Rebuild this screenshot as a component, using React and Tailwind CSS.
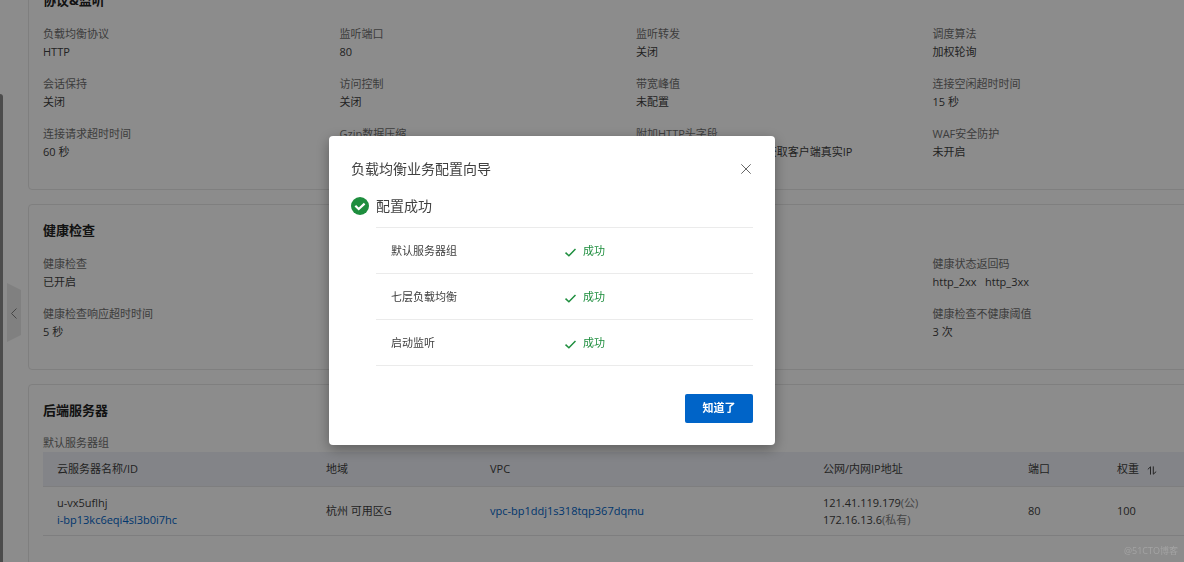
import React, { useState } from "react";

const listenerInfo = [
  { label: "负载均衡协议", value: "HTTP" },
  { label: "监听端口", value: "80" },
  { label: "监听转发", value: "关闭" },
  { label: "调度算法", value: "加权轮询" },
  { label: "会话保持", value: "关闭" },
  { label: "访问控制", value: "关闭" },
  { label: "带宽峰值", value: "未配置" },
  { label: "连接空闲超时时间", value: "15 秒" },
  { label: "连接请求超时时间", value: "60 秒" },
  { label: "Gzip数据压缩", value: "已开启" },
  { label: "附加HTTP头字段", value: "从X-Forwarded-For头字段获取客户端真实IP" },
  { label: "WAF安全防护", value: "未开启" },
];

const healthInfo = [
  { label: "健康检查", value: "已开启" },
  { label: "健康检查协议", value: "HTTP" },
  { label: "健康检查端口", value: "80" },
  { label: "健康状态返回码", value: "http_2xx\u00a0\u00a0 http_3xx" },
  { label: "健康检查响应超时时间", value: "5 秒" },
  { label: "健康检查间隔时间", value: "2 秒" },
  { label: "健康检查健康阈值", value: "3 次" },
  { label: "健康检查不健康阈值", value: "3 次" },
];

const steps = ["默认服务器组", "七层负载均衡", "启动监听"];

function Card({ title, children }) {
  return (
    <section className="border border-[#e8e8e8] rounded px-[14px] pt-4 pb-7">
      <h2 className="text-[13px] leading-[18px] font-bold text-[#222]">{title}</h2>
      {children}
    </section>
  );
}

function InfoGrid({ items }) {
  return (
    <dl className="mt-4 grid grid-cols-4 gap-y-[14px]">
      {items.map((item) => (
        <div key={item.label} className="whitespace-nowrap">
          <dt className="text-[#707070]">{item.label}</dt>
          <dd className="text-[#404040]">{item.value}</dd>
        </div>
      ))}
    </dl>
  );
}

function SortIcon() {
  return (
    <svg viewBox="0 0 10 9" className="w-[10px] h-[9px] mt-1" fill="none" stroke="#444" strokeWidth="1">
      <path d="M0.8 3.4 3.5 0.8V8.6M6.3 0.4V8.2L9.2 5.6" />
    </svg>
  );
}

function ServerTable() {
  return (
    <table className="w-full table-fixed text-left text-[#404040]">
      <colgroup>
        <col className="w-[269px]" />
        <col className="w-[164px]" />
        <col className="w-[333px]" />
        <col className="w-[205px]" />
        <col className="w-[89px]" />
        <col />
      </colgroup>
      <thead>
        <tr className="h-[34px] bg-[#eff1f8] border-b border-[#e6e6e8]">
          <th className="px-[14px] font-normal">云服务器名称/ID</th>
          <th className="px-[14px] font-normal">地域</th>
          <th className="px-[14px] font-normal">VPC</th>
          <th className="px-[14px] font-normal">公网/内网IP地址</th>
          <th className="px-[14px] font-normal">端口</th>
          <th className="px-[14px] font-normal">
            <span className="flex items-center gap-2">
              权重 <SortIcon />
            </span>
          </th>
        </tr>
      </thead>
      <tbody>
        <tr className="h-[49px] border-b border-[#e6e6e8] leading-[17px]">
          <td className="px-[14px]">
            <div>u-vx5uflhj</div>
            <a href="#instance" className="text-[#0064c8]">i-bp13kc6eqi4sl3b0i7hc</a>
          </td>
          <td className="px-[14px]">杭州 可用区G</td>
          <td className="px-[14px]">
            <a href="#vpc" className="text-[#0064c8]">vpc-bp1ddj1s318tqp367dqmu</a>
          </td>
          <td className="px-[14px]">
            <div>121.41.119.179<span className="text-[#808080]">(公)</span></div>
            <div>172.16.13.6<span className="text-[#808080]">(私有)</span></div>
          </td>
          <td className="px-[14px]">80</td>
          <td className="px-[14px]">100</td>
        </tr>
      </tbody>
    </table>
  );
}

function WizardDialog({ onClose }) {
  return (
    <div className="fixed inset-0 flex items-center justify-center pr-20 pt-[18px] bg-black/45">
      <div
        role="dialog"
        aria-labelledby="wizard-title"
        className="w-[446px] rounded bg-white p-[22px] text-[#404040] shadow-[0_4px_14px_rgba(0,0,0,0.35)]"
      >
        <div className="flex items-center justify-between">
          <h1 id="wizard-title" className="text-[14px] leading-[22px]">负载均衡业务配置向导</h1>
          <button type="button" aria-label="关闭" onClick={onClose} className="p-[2px]">
            <svg viewBox="0 0 10 10" className="w-[10px] h-[10px]" fill="none" stroke="#666" strokeWidth="1">
              <path d="M0.3 0.3 9.7 9.7M9.7 0.3 0.3 9.7" />
            </svg>
          </button>
        </div>
        <div className="mt-[15px] flex items-center gap-[7px]">
          <svg viewBox="0 0 18 18" className="w-[18px] h-[18px]">
            <circle cx="9" cy="9" r="9" fill="#1e8e3e" />
            <path d="M4.3 8.7 7.7 12 13.6 6.6" fill="none" stroke="#fff" strokeWidth="2.2" />
          </svg>
          <p className="text-[14px] leading-[22px]">配置成功</p>
        </div>
        <div className="mt-[10px] ml-[25px]">
          <table className="w-full table-fixed text-left border-t border-[#ebebeb]">
            <colgroup>
              <col className="w-[174px]" />
              <col />
            </colgroup>
            <tbody>
              {steps.map((step) => (
                <tr key={step} className="h-[46px] border-b border-[#ebebeb]">
                  <th className="px-[15px] pt-[2px] font-normal">{step}</th>
                  <td className="px-[15px] pt-[2px] text-[#1e8e3e]">
                    <span className="flex items-center gap-[7px]">
                      <svg viewBox="0 0 11 9" className="w-[11px] h-[9px] mt-[2px]" fill="none" stroke="#1e8e3e" strokeWidth="1.5">
                        <path d="M0.5 4.6 3.9 7.8 10.5 1" />
                      </svg>
                      成功
                    </span>
                  </td>
                </tr>
              ))}
            </tbody>
          </table>
        </div>
        <div className="mt-7 flex justify-end">
          <button
            type="button"
            onClick={onClose}
            className="w-[68px] h-[29px] rounded-xs bg-[#0064c8] font-bold text-white"
          >
            知道了
          </button>
        </div>
      </div>
    </div>
  );
}

function App() {
  const [open, setOpen] = useState(true);

  return (
    <div className="relative h-screen overflow-hidden bg-white font-['Open_Sans','Noto_Sans_CJK_SC',sans-serif] text-[11px] leading-[18px]">
      <div className="absolute left-0 top-[94px] bottom-0 w-[3px] rounded-tr bg-[#8a8a8a]" />
      <button
        type="button"
        aria-label="收起菜单"
        className="absolute left-[7px] top-[283px] w-[14px] h-[59px]"
      >
        <svg viewBox="0 0 14 59" className="w-[14px] h-[59px]">
          <path d="M0 0 14 7V52L0 59Z" fill="#e9e9e9" />
          <path d="M9.5 25.5 4.5 30.5 9.5 35.5" fill="none" stroke="#808080" />
        </svg>
      </button>

      <main className="ml-[28px] -mr-[60px] -mt-[26px] flex flex-col gap-[14px]">
        <Card title="协议&监听">
          <InfoGrid items={listenerInfo} />
        </Card>
        <Card title="健康检查">
          <InfoGrid items={healthInfo} />
        </Card>
        <Card title="后端服务器">
          <p className="mt-[15px] text-[#707070]">默认服务器组</p>
          <ServerTable />
        </Card>
      </main>

      {open && <WizardDialog onClose={() => setOpen(false)} />}
      <span className="absolute right-[6px] bottom-[2px] text-[9px] text-[#a4a4a4]">@51CTO博客</span>
    </div>
  );
}

export default App;
